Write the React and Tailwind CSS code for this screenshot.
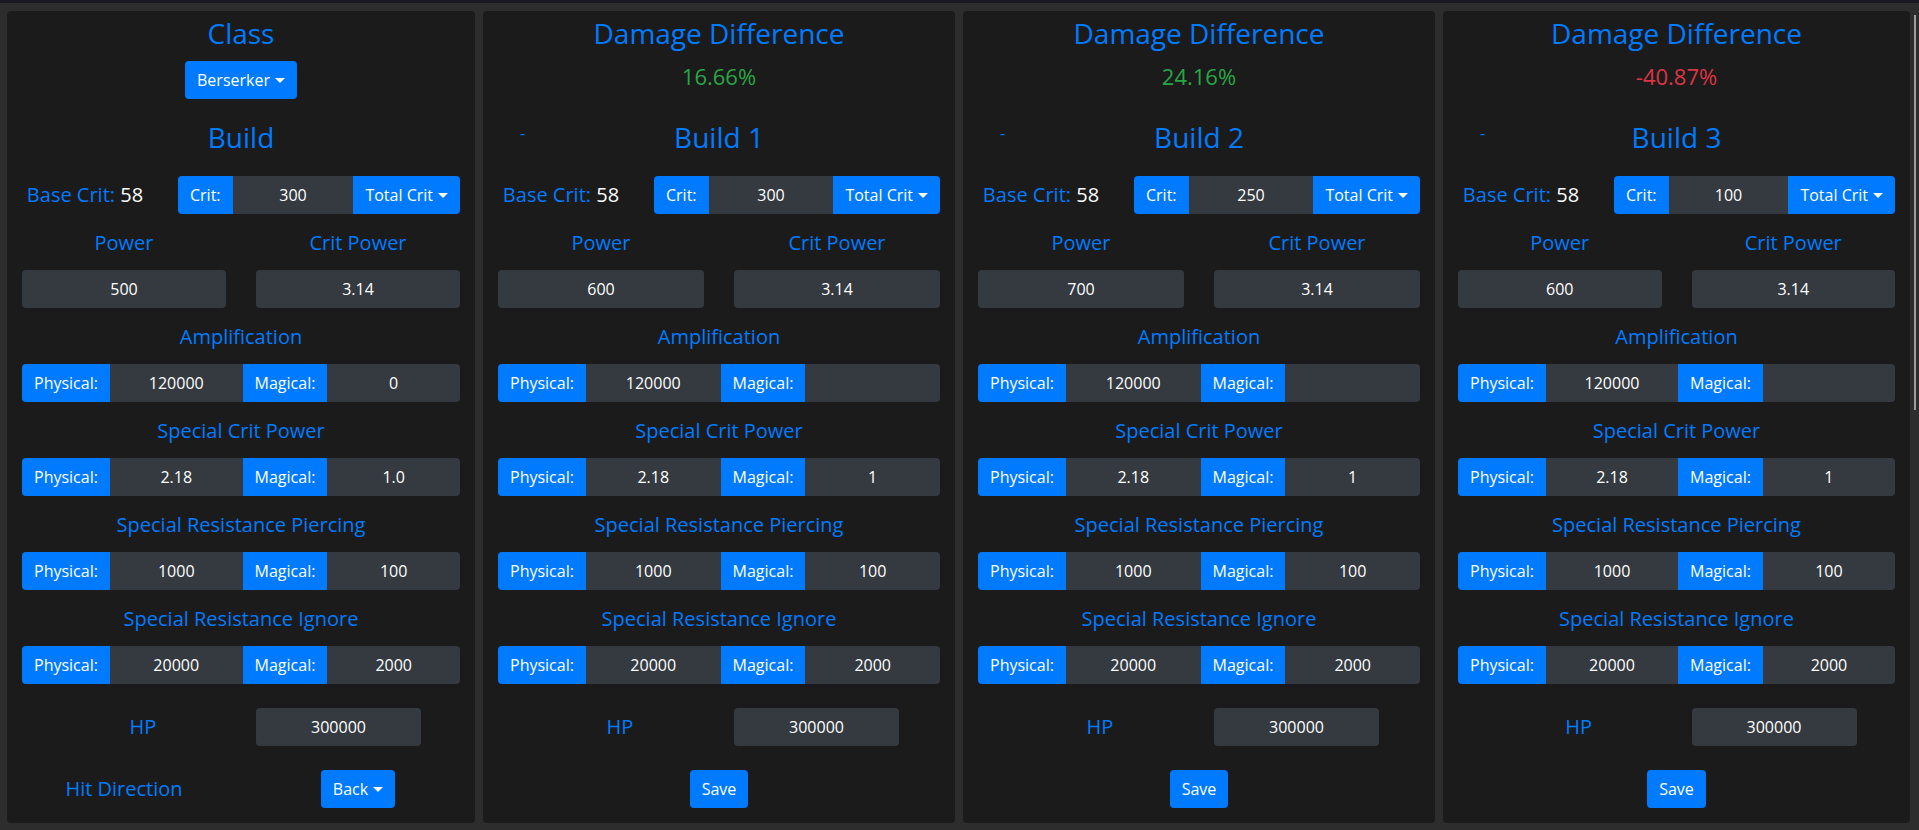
import React from 'react'

const builds = [
  { title: 'Build', diff: null, crit: '300', power: '500', amp: ['120000', '0'], scp: ['2.18', '1.0'], srp: ['1000', '100'], sri: ['20000', '2000'], hp: '300000', w: 'w-[468px]' },
  { title: 'Build 1', diff: '16.66%', up: true, crit: '300', power: '600', amp: ['120000', ''], scp: ['2.18', '1'], srp: ['1000', '100'], sri: ['20000', '2000'], hp: '300000', w: 'w-[472px]' },
  { title: 'Build 2', diff: '24.16%', up: true, crit: '250', power: '700', amp: ['120000', ''], scp: ['2.18', '1'], srp: ['1000', '100'], sri: ['20000', '2000'], hp: '300000', w: 'w-[472px]' },
  { title: 'Build 3', diff: '-40.87%', up: false, crit: '100', power: '600', amp: ['120000', ''], scp: ['2.18', '1'], srp: ['1000', '100'], sri: ['20000', '2000'], hp: '300000', w: 'w-[467px]' },
]

function Caret() {
  return (
    <span className="inline-block ml-[5px] align-[3px] w-0 h-0 border-t-[5px] border-l-[5px] border-r-[5px] border-t-white border-l-transparent border-r-transparent" />
  )
}

function Field({ value, className = '' }) {
  return (
    <div className={`h-[38px] flex items-center justify-center bg-[#343a40] text-white text-[16px] ${className}`}>
      {value}
    </div>
  )
}

function Label({ children }) {
  return <div className="h-[38px] flex items-center px-3 bg-[#007bff] text-white text-[16px]">{children}</div>
}

function Section({ title, values }) {
  return (
    <>
      <div className="mt-[17px] text-center text-[20px] leading-[24px] text-[#007bff]">{title}</div>
      <div className="mt-[15px] flex rounded overflow-hidden">
        <Label>Physical:</Label>
        <Field value={values[0]} className="flex-1" />
        <Label>Magical:</Label>
        <Field value={values[1]} className="flex-1" />
      </div>
    </>
  )
}

function Panel({ build, first }) {
  return (
    <div className={`${build.w} shrink-0 bg-[#1b1b1b] rounded px-[15px] pt-[5px] pb-[15px]`}>
      {first ? (
        <>
          <div className="text-center text-[28px] leading-[34px] text-[#007bff]">Class</div>
          <div className="mt-[11px] flex justify-center">
            <button className="h-[38px] px-3 rounded bg-[#007bff] text-white text-[16px]">
              Berserker<Caret />
            </button>
          </div>
          <div className="mt-[21px] text-center text-[28px] leading-[34px] text-[#007bff]">{build.title}</div>
        </>
      ) : (
        <>
          <div className="text-center text-[28px] leading-[34px] text-[#007bff]">Damage Difference</div>
          <div className={`mt-[13px] text-center text-[22px] leading-[26px] ${build.up ? 'text-[#28a745]' : 'text-[#dc3545]'}`}>
            {build.diff}
          </div>
          <div className="mt-[31px] grid grid-cols-3 items-center">
            <div className="pl-[22px] mb-[8px] text-[16px] leading-[24px] text-[#007bff]">-</div>
            <div className="text-center text-[28px] leading-[34px] text-[#007bff]">{build.title}</div>
            <div />
          </div>
        </>
      )}

      {/* Crit row */}
      <div className="mt-[22px] grid grid-cols-[126px_1fr] gap-[30px] items-center">
        <div className="text-center text-[20px] leading-[24px] whitespace-nowrap">
          <span className="text-[#007bff]">Base Crit: </span>
          <span className="text-white">58</span>
        </div>
        <div className="flex rounded overflow-hidden">
          <Label>Crit:</Label>
          <Field value={build.crit} className="flex-1" />
          <div className="h-[38px] flex items-center px-3 bg-[#007bff] text-white text-[16px] whitespace-nowrap">
            Total Crit<Caret />
          </div>
        </div>
      </div>

      {/* Power / Crit Power */}
      <div className="mt-[17px] grid grid-cols-2 gap-[30px]">
        <div>
          <div className="text-center text-[20px] leading-[24px] text-[#007bff]">Power</div>
          <Field value={build.power} className="mt-[15px] rounded" />
        </div>
        <div>
          <div className="text-center text-[20px] leading-[24px] text-[#007bff]">Crit Power</div>
          <Field value="3.14" className="mt-[15px] rounded" />
        </div>
      </div>

      <Section title="Amplification" values={build.amp} />
      <Section title="Special Crit Power" values={build.scp} />
      <Section title="Special Resistance Piercing" values={build.srp} />
      <Section title="Special Resistance Ignore" values={build.sri} />

      {/* HP */}
      <div className="mt-[24px] grid grid-cols-2 gap-[30px] items-center">
        <div className="pl-[38px] text-center text-[20px] leading-[24px] text-[#007bff]">HP</div>
        <Field value={build.hp} className="w-[165px] rounded" />
      </div>

      {first ? (
        <div className="mt-[24px] grid grid-cols-2 gap-[30px] items-center">
          <div className="text-center text-[20px] leading-[24px] text-[#007bff]">Hit Direction</div>
          <div className="flex justify-center">
            <button className="h-[38px] px-3 rounded bg-[#007bff] text-white text-[16px]">
              Back<Caret />
            </button>
          </div>
        </div>
      ) : (
        <div className="mt-[24px] flex justify-center">
          <button className="h-[38px] px-3 rounded bg-[#007bff] text-white text-[16px]">Save</button>
        </div>
      )}
    </div>
  )
}

export default function App() {
  return (
    <div
      className="relative min-h-[830px] bg-[#2d2d2d] border-t-[3px] border-[#1a1921]"
      style={{ fontFamily: '"Open Sans", "Noto Sans", sans-serif' }}
    >
      <div className="flex gap-2 pl-[7px] pr-[9px] pt-[8px] pb-[7px]">
        {builds.map((b, i) => (
          <Panel key={i} build={b} first={i === 0} />
        ))}
      </div>
      {/* scrollbar thumb */}
      <div className="absolute right-[3px] top-[12px] w-[2px] h-[395px] bg-[#9e9e9e]" />
    </div>
  )
}
